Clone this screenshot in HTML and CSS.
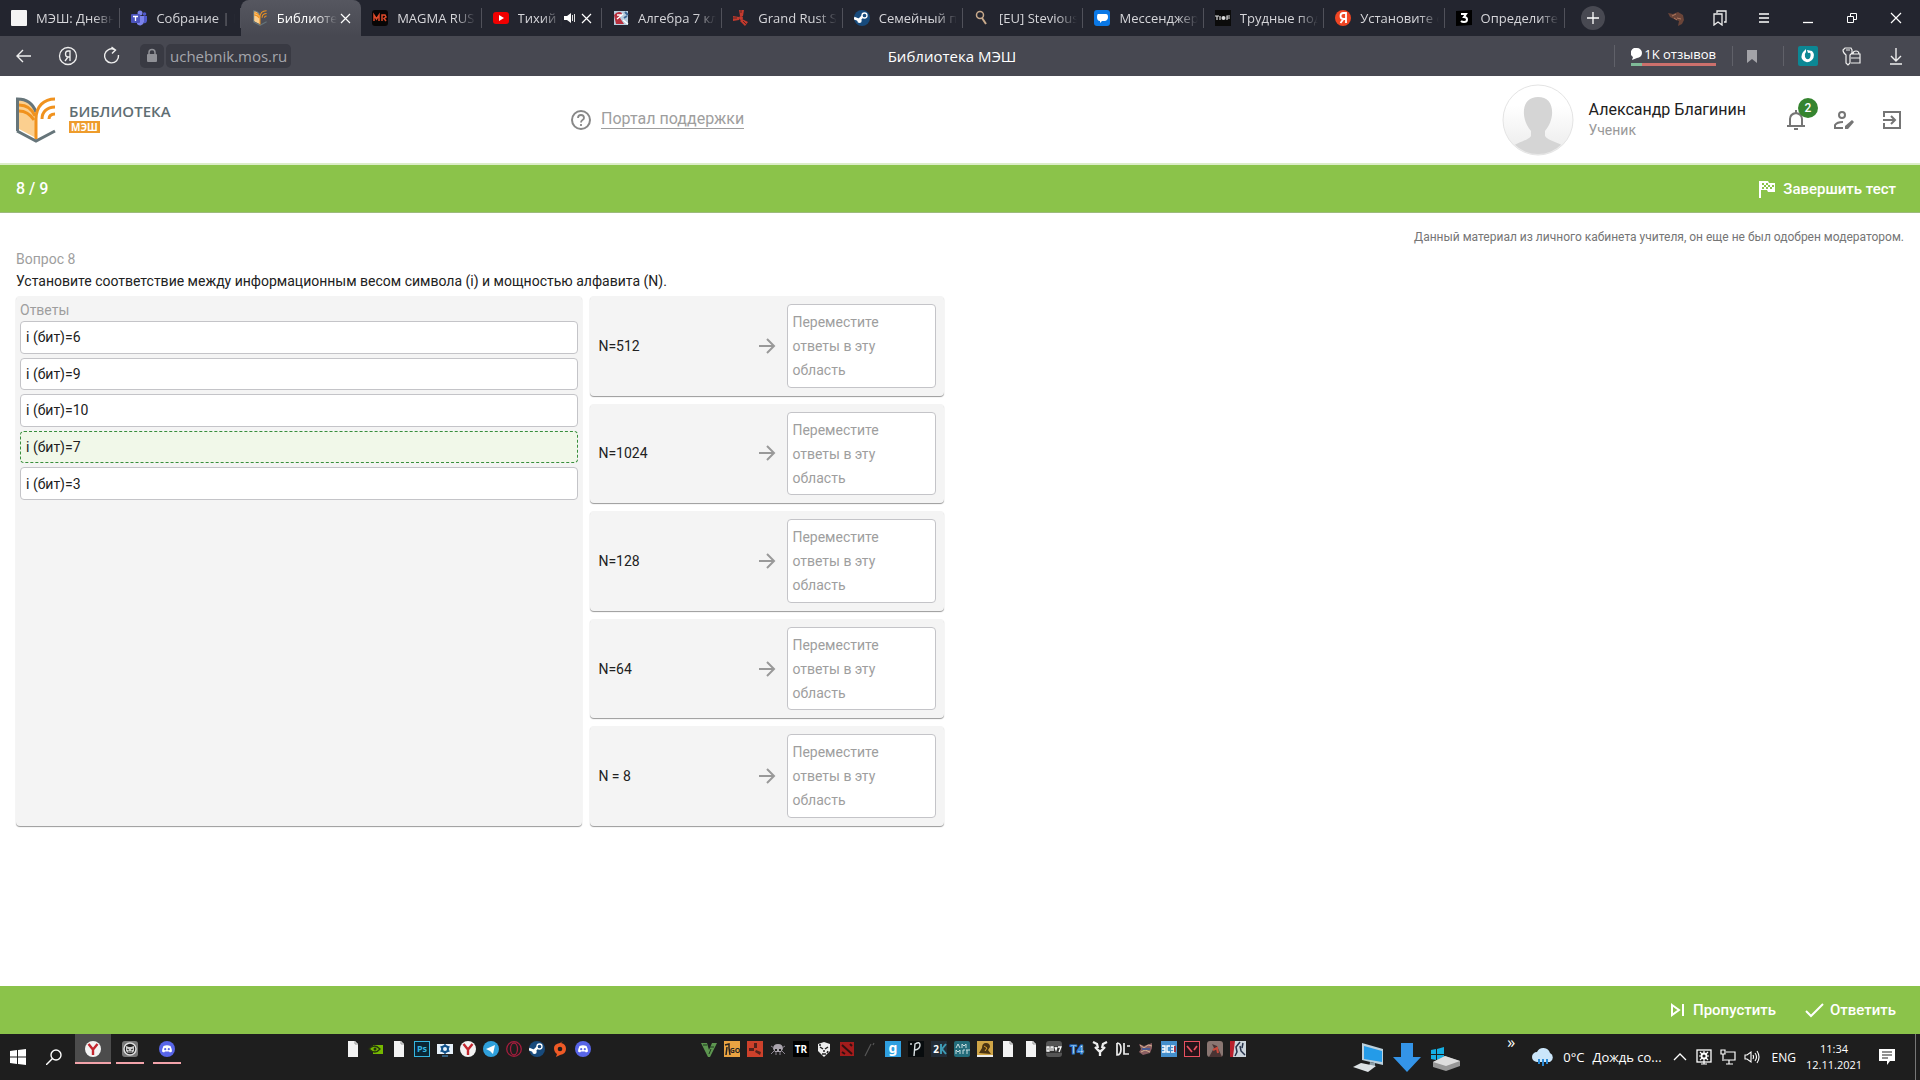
FILE: index.html
```html
<!DOCTYPE html>
<html lang="ru">
<head>
    <meta charset="UTF-8">
    <meta name="viewport" content="width=device-width, initial-scale=1.0">
    <title>Библиотека МЭШ</title>
    <link rel="stylesheet" href="styles.css">
</head>
<body>
    <!-- Shared icons -->
    <svg class="sprite" aria-hidden="true">
        <symbol id="i-book" viewBox="0 0 40 46">
            <path d="M3 3c8 0 14 5 17 12v26L3 32z" fill="#fbcf8f"/>
            <path d="M3 8c8 0 13 4 16 11M3 14c6 0 11 3 15 9" fill="none" stroke="#f0921e" stroke-width="3"/>
            <path d="M1.500 34V2C11 2 17 7 20 15" fill="none" stroke="#66757a" stroke-width="3"/>
            <path d="M1 34l19 10 19-10" fill="none" stroke="#66757a" stroke-width="3"/>
            <path d="M20 42V22C20 9 28 2 39 2M26 22c0-7 5-12 13-12M33 22c0-3 2-5 6-5" fill="none" stroke="#f0921e" stroke-width="3"/>
        </symbol>
        <symbol id="i-discord" viewBox="0 0 16 16">
            <circle cx="8" cy="8" r="8" fill="#5865e8"/>
            <path d="M4.500 5Q8 3.500 11.500 5q1.500 3 1.500 5.500l-2 1-1-1H6l-1 1-2-1Q3 8 4.500 5z" fill="#fff"/>
            <circle cx="6.200" cy="8.200" r="1.100" fill="#5865e8"/><circle cx="9.800" cy="8.200" r="1.100" fill="#5865e8"/>
        </symbol>
        <symbol id="i-yandex" viewBox="0 0 16 16">
            <circle cx="8" cy="8" r="8" fill="#f3f3f3"/>
            <path d="M3.500 3L8 8.500 12.500 3M8 8v6" fill="none" stroke="#c3272f" stroke-width="2.400"/>
        </symbol>
        <symbol id="i-steam" viewBox="0 0 16 16">
            <circle cx="8" cy="8" r="8" fill="#174a7c"/>
            <path d="M0 8l5 2 4-4" fill="none" stroke="#fff" stroke-width="2.600"/>
            <circle cx="10.500" cy="5.500" r="2.500" fill="#174a7c" stroke="#fff" stroke-width="1.300"/>
            <circle cx="5.500" cy="10.800" r="2.200" fill="#fff"/>
        </symbol>
        <symbol id="i-page" viewBox="0 0 16 16">
            <path d="M3 0h7l3 3v13H3z" fill="#f3f3f3"/><path d="M10 0v3h3" fill="none" stroke="#999"/>
        </symbol>
        <symbol id="i-rust" viewBox="0 0 16 16">
            <path d="M6 0h5l-1 6H7zM0 6l6 1v3l-6 1zM9 9l6 3-3 4-5-5z" fill="#c43a2e"/><circle cx="8" cy="8" r="2" fill="#c43a2e"/><path d="M0 8h4M8 0v3M10 11l3 3" stroke="#5a2420"/>
        </symbol>
        <symbol id="i-close" viewBox="0 0 16 16">
            <path d="M4 4l9 9M13 4l-9 9" fill="none" stroke="currentColor" stroke-width="1.200"/>
        </symbol>
        <symbol id="i-arrow" viewBox="0 0 24 24">
            <path d="M4 12h15M12 5l7 7-7 7" fill="none" stroke="#999" stroke-width="2"/>
        </symbol>
    </svg>

    <!-- Browser tabs -->
    <div class="tabbar">
        <nav class="tabs">
            <div class="tab"><svg class="icon" viewBox="0 0 16 16"><rect width="16" height="16" rx="1" fill="#f4f4f4"/></svg><a class="tab-title" href="#">МЭШ: Дневн</a></div>
            <div class="tab"><svg class="icon" viewBox="0 0 16 16"><circle cx="9" cy="3" r="2.500" fill="#7b83eb"/><circle cx="13.500" cy="4" r="1.800" fill="#5059c9"/><path d="M6 6h7v6a4 4 0 0 1-7 2z" fill="#7b83eb"/><path d="M13 6h3v5q-1 3-3 2z" fill="#5059c9"/><rect y="4" width="9" height="9" rx="1" fill="#4b53bc"/><path d="M2 6.500h5M4.500 6.500V11" stroke="#fff" stroke-width="1.300"/></svg><a class="tab-title" href="#">Собрание | М</a></div>
            <div class="tab active"><svg class="icon"><use href="#i-book"/></svg><a class="tab-title" href="#">Библиоте</a><button class="tab-close" aria-label="Закрыть"><svg class="icon"><use href="#i-close"/></svg></button></div>
            <div class="tab"><svg class="icon" viewBox="0 0 16 16"><rect width="16" height="16" rx="3" fill="#080606"/><path d="M2 11V5l2.500 4L7 5v6M10 11V5h3l1 2-2 1.500 2 2.500" fill="none" stroke="#e04a2a" stroke-width="1.500"/></svg><a class="tab-title" href="#">MAGMA RUS</a></div>
            <div class="tab"><svg class="icon" viewBox="0 0 16 16"><rect y="2" width="16" height="12" rx="3" fill="#f00000"/><path d="M6 5l5 3-5 3z" fill="#fff"/></svg><a class="tab-title" href="#">Тихий р</a><svg class="sound" viewBox="0 0 12 12"><path d="M0 4h3l4-3v10L3 8H0z" fill="#fff"/><path d="M8.500 3v6M10.500 2v8" stroke="#ddd"/></svg><button class="tab-close" aria-label="Закрыть"><svg class="icon"><use href="#i-close"/></svg></button></div>
            <div class="tab"><svg class="icon" viewBox="0 0 16 16"><rect x="1" y="1" width="14" height="14" fill="#b9cede"/><path d="M1 5q4-5 8-2l-2 5 4 6H3z" fill="#b72f3d"/><path d="M4 5h4M4 9l6-5M10 10l5 4" stroke="#fff" stroke-width="1.500"/><path d="M12 2l3 3M11 8l3-2" stroke="#3e6897" stroke-width="2"/></svg><a class="tab-title" href="#">Алгебра 7 кл</a></div>
            <div class="tab"><svg class="icon"><use href="#i-rust"/></svg><a class="tab-title" href="#">Grand Rust S</a></div>
            <div class="tab"><svg class="icon"><use href="#i-steam"/></svg><a class="tab-title" href="#">Семейный п</a></div>
            <div class="tab"><svg class="icon" viewBox="0 0 16 16"><circle cx="6" cy="5" r="3.500" fill="none" stroke="#c9aa8c" stroke-width="1.500"/><path d="M8 8l4 6" stroke="#c9aa8c" stroke-width="2"/></svg><a class="tab-title" href="#">[EU] Stevious</a></div>
            <div class="tab"><svg class="icon" viewBox="0 0 16 16"><rect width="16" height="16" rx="3" fill="#0a78e6"/><path d="M4 4h8q2 0 2 3t-3 4H8l-2 2v-2q-3 0-3-4 0-3 1-3z" fill="#fff"/></svg><a class="tab-title" href="#">Мессенджер</a></div>
            <div class="tab"><svg class="icon" viewBox="0 0 16 16"><rect width="16" height="16" fill="#0b0b0b"/><path d="M0 6h4M2 6v4M5 6v4M12 10V6h3M12 8h3" stroke="#ddd" stroke-width="1.200"/><circle cx="8.500" cy="8" r="2" fill="#ddd"/></svg><a class="tab-title" href="#">Трудные под</a></div>
            <div class="tab"><svg class="icon" viewBox="0 0 16 16"><circle cx="8" cy="8" r="8" fill="#ef4523"/><path d="M11 13V3H8.500Q5.500 3 5.500 6t3 3H11M8.500 9L5.500 13" fill="none" stroke="#fff" stroke-width="1.800"/></svg><a class="tab-title" href="#">Установите с</a></div>
            <div class="tab"><svg class="icon" viewBox="0 0 16 16"><path d="M0 1l16-1v15L0 16z" fill="#000"/><path d="M5 4h5L8 7q3 0 3 2.500T8 12q-2 0-3-1" fill="none" stroke="#fff" stroke-width="2"/></svg><a class="tab-title" href="#">Определите</a></div>
        </nav>
        <div class="window-tools">
            <button class="new-tab" aria-label="Новая вкладка"><svg class="icon" viewBox="0 0 16 16"><path d="M8 2v12M2 8h12" stroke="#fff" stroke-width="1.300"/></svg></button>
            <button class="win-btn" aria-label="Профиль"><svg class="icon" viewBox="0 0 16 16"><path d="M0 3l5 1 5-2 5 3 1 5-2 4-4 2 1-5-5-2-4-2z" fill="#6a4438"/><path d="M4 6l4-2M9 8l4 1M6 8l3 2" stroke="#b07a61"/></svg></button>
            <button class="win-btn" aria-label="Коллекции"><svg class="icon" viewBox="0 0 16 16"><path d="M5 3V1h9v11h-2M2 4h8v11l-4-3-4 3z" fill="none" stroke="#eee" stroke-width="1.300"/></svg></button>
            <button class="win-btn" aria-label="Меню"><svg class="icon" viewBox="0 0 16 16"><path d="M3 4h10M3 8h10M3 12h10" stroke="#fff" stroke-width="1.300"/></svg></button>
            <button class="win-btn" aria-label="Свернуть"><svg class="icon" viewBox="0 0 16 16"><path d="M3 12.500h10" stroke="#fff" stroke-width="1.300"/></svg></button>
            <button class="win-btn" aria-label="Развернуть"><svg class="icon" viewBox="0 0 16 16"><path d="M3.500 6.500h6v6h-6zM6.500 6V3.500h6v6H10" fill="none" stroke="#fff"/></svg></button>
            <button class="win-btn" aria-label="Закрыть окно"><svg class="icon" viewBox="0 0 16 16"><path d="M3 3l10 10M13 3L3 13" stroke="#fff" stroke-width="1.200"/></svg></button>
        </div>
    </div>

    <!-- Address bar -->
    <div class="toolbar">
        <div class="toolbar-side">
            <button class="nav-btn" aria-label="Назад"><svg viewBox="0 0 20 20"><path d="M17 10H3M9 4l-6 6 6 6" fill="none" stroke="#eee" stroke-width="1.400"/></svg></button>
            <button class="nav-btn" aria-label="Яндекс"><svg viewBox="0 0 20 20"><circle cx="10" cy="10" r="8.500" fill="none" stroke="#eee" stroke-width="1.300"/><path d="M12 15V5h-2q-2.500 0-2.500 3T10 11h2M10 11l-3 4" fill="none" stroke="#eee" stroke-width="1.300"/></svg></button>
            <button class="nav-btn" aria-label="Обновить"><svg viewBox="0 0 20 20"><path d="M16.500 9a7 7 0 1 1-4-5.500M9.500 1l4 3-3.500 3.500" fill="none" stroke="#eee" stroke-width="1.400"/></svg></button>
            <span class="lock"><svg class="icon" viewBox="0 0 16 16"><rect x="3" y="6" width="10" height="8" rx="1" fill="#909197"/><path d="M5 7V4.500a3 3 0 0 1 6 0V7" fill="none" stroke="#909197" stroke-width="1.500"/></svg></span>
            <a class="url" href="#">uchebnik.mos.ru</a>
        </div>
        <div class="page-title">Библиотека МЭШ</div>
        <div class="toolbar-side right">
            <a class="reviews" href="#"><span><svg viewBox="0 0 12 12"><path d="M6 0a5 5 0 0 1 0 10L1 12l1-3a5 5 0 0 1 4-9z" fill="#fff"/></svg>1K отзывов</span></a>
            <button class="mark" aria-label="Закладка"><svg class="icon" viewBox="0 0 16 16"><path d="M3 2h10v13l-5-4-5 4z" fill="#a3a3a8"/></svg></button>
            <button class="nav-btn" aria-label="Расширение"><svg viewBox="0 0 20 20"><rect width="20" height="20" rx="2" fill="#0c8794"/><path d="M8 3Q2 8 4 13q4 6 10 1 4-5 0-9l-5-1 1 3q4-1 2 5-3 3-5-1-1-3 1-5z" fill="#fff"/></svg></button>
            <button class="nav-btn" aria-label="Пароли"><svg viewBox="0 0 20 20"><path d="M4 9Q1 7 1 4l2-2h6l1 2v3L8 9v8l-2 2-2-2zM11 8q0-3 3-3t3 3M9 8h9v9H9M9 12h9M4 4h4" fill="none" stroke="#eee" stroke-width="1.200"/></svg></button>
            <button class="nav-btn" aria-label="Загрузки"><svg viewBox="0 0 20 20"><path d="M10 2v13M5 10l5 5 5-5M4 18h12" fill="none" stroke="#eee" stroke-width="1.400"/></svg></button>
        </div>
    </div>

    <header class="header">
        <a class="logo" href="#">
            <svg viewBox="0 0 40 46"><use href="#i-book"/></svg>
            <span class="logo-text"><b>БИБЛИОТЕКА</b><i>МЭШ</i></span>
        </a>
        <div class="support">
            <svg viewBox="0 0 20 20"><circle cx="10" cy="10" r="9" fill="none" stroke="#888" stroke-width="2"/><path d="M7 8q0-3 3-3t3 3q0 1-1.500 2T10 12.500M10 14v2" fill="none" stroke="#888" stroke-width="1.800"/></svg>
            <a href="#">Портал поддержки</a>
        </div>
        <div class="profile">
            <svg class="avatar" viewBox="0 0 72 72">
                <defs>
                    <clipPath id="face"><circle cx="36" cy="36" r="34"/></clipPath>
                    <linearGradient id="fade" x2="0" y2="1"><stop offset="0.300" stop-color="#fff"/><stop offset="1" stop-color="#eaeaea"/></linearGradient>
                </defs>
                <circle cx="36" cy="36" r="35" fill="url(#fade)" stroke="#e4e4e4"/>
                <path d="M36 13c10 0 15 7 14 18-1 8-4 12-7 16v5c3 5 15 6 20 12v10H9V64c5-6 17-7 20-12v-5c-3-4-6-8-7-16-1-11 4-18 14-18z" fill="#d5d5d5" clip-path="url(#face)"/>
            </svg>
            <div class="user">
                <div class="user-name">Александр Благинин</div>
                <div class="user-role">Ученик</div>
            </div>
            <button class="bell" aria-label="Уведомления"><svg viewBox="0 0 24 24"><path d="M6 18v-7q0-5 6-6 6 1 6 6v7M3 18h18M12 2v3M10 21h4" fill="none" stroke="#757575" stroke-width="2"/></svg><span class="badge">2</span></button>
            <button aria-label="Редактировать профиль"><svg viewBox="0 0 24 24"><circle cx="10" cy="7" r="3" fill="none" stroke="#757575" stroke-width="2"/><path d="M11 20H3v-3q2-3 8-3" fill="none" stroke="#757575" stroke-width="2"/><path d="M13 21v-3l7-6 2 2-6 7z" fill="#757575"/></svg></button>
            <button aria-label="Выход"><svg viewBox="0 0 24 24"><path d="M4 9V4h16v16H4v-5M3 12h12M11 8l4 4-4 4" fill="none" stroke="#757575" stroke-width="2"/></svg></button>
        </div>
    </header>

    <div class="test-bar">
        <span>8 / 9</span>
        <button class="bar-btn"><svg viewBox="0 0 20 20"><path d="M3 2v17" stroke="#fff" stroke-width="2"/><path d="M3 2h8l1 2h6v9h-7l-1-2H3z" fill="#fff"/><path d="M5 4h2v2H5zM9 4h2v2H9zM7 6h2v2H7zM11 6h2v2h-2zM5 8h2v2H5zM9 8h2v2H9zM13 8h2v2h-2zM15 6h2v2h-2z" fill="#8bc34a"/></svg>Завершить тест</button>
    </div>

    <main>
        <p class="notice">Данный материал из личного кабинета учителя, он еще не был одобрен модератором.</p>
        <div class="question-number">Вопрос 8</div>
        <h1>Установите соответствие между информационным весом символа (i) и мощностью алфавита (N).</h1>
        <div class="match">
            <section class="answers">
                <h2>Ответы</h2>
                <ul>
                    <li>i (бит)=6</li>
                    <li>i (бит)=9</li>
                    <li>i (бит)=10</li>
                    <li class="selected">i (бит)=7</li>
                    <li>i (бит)=3</li>
                </ul>
            </section>
            <section class="targets">
                <div class="target"><span>N=512</span><svg><use href="#i-arrow"/></svg><div class="drop">Переместите ответы в эту область</div></div>
                <div class="target"><span>N=1024</span><svg><use href="#i-arrow"/></svg><div class="drop">Переместите ответы в эту область</div></div>
                <div class="target"><span>N=128</span><svg><use href="#i-arrow"/></svg><div class="drop">Переместите ответы в эту область</div></div>
                <div class="target"><span>N=64</span><svg><use href="#i-arrow"/></svg><div class="drop">Переместите ответы в эту область</div></div>
                <div class="target"><span>N = 8</span><svg><use href="#i-arrow"/></svg><div class="drop">Переместите ответы в эту область</div></div>
            </section>
        </div>
    </main>

    <footer class="action-bar">
        <button class="bar-btn"><svg viewBox="0 0 20 20"><path d="M5 5l7 5-7 5zM16 4v12" fill="none" stroke="#fff" stroke-width="2"/></svg>Пропустить</button>
        <button class="bar-btn"><svg viewBox="0 0 20 20"><path d="M2 11l5 5L19 4" fill="none" stroke="#fff" stroke-width="2"/></svg>Ответить</button>
    </footer>

    <!-- Windows taskbar -->
    <div class="taskbar">
        <button class="start" aria-label="Пуск"><svg class="icon" viewBox="0 0 16 16"><path d="M0 2l7-1v6.500H0zM8 1l8-1v7.500H8zM0 8.500h7V15l-7-1zM8 8.500h8V16l-8-1z" fill="#fff"/></svg></button>
        <button class="start" aria-label="Поиск"><svg class="icon" viewBox="0 0 16 16"><circle cx="10" cy="6" r="5" fill="none" stroke="#fff" stroke-width="1.400"/><path d="M6.500 9.500L0 16" stroke="#fff" stroke-width="1.400"/></svg></button>
        <div class="apps">
            <button class="app current" aria-label="Яндекс"><svg class="icon"><use href="#i-yandex"/></svg></button>
            <button class="app" aria-label="Игра"><svg class="icon" viewBox="0 0 16 16"><rect width="16" height="16" rx="3" fill="#777"/><circle cx="8" cy="8" r="6" fill="#222" stroke="#ddd" stroke-width="1.500"/><path d="M4 5l3 1h2l3-1v5l-2 2H6l-2-2z" fill="#ccc"/><path d="M5 8l2 1M11 8L9 9M6 11h4" stroke="#222"/></svg></button>
            <button class="app" aria-label="Discord"><svg class="icon"><use href="#i-discord"/></svg></button>
        </div>
        <div class="quick">
            <svg class="icon"><use href="#i-page"/></svg>
            <svg class="icon" viewBox="0 0 16 16"><path d="M5 4h10v9H5z" fill="#76b900"/><path d="M1 8q5-6 11 0-5 6-11 0z" fill="#76b900" stroke="#26340e" stroke-width="1.300"/><circle cx="7" cy="8" r="1.500" fill="#26340e"/></svg>
            <svg class="icon"><use href="#i-page"/></svg>
            <svg class="icon" viewBox="0 0 16 16"><rect x="0.500" y="0.500" width="15" height="15" fill="#0a2634" stroke="#35b5e0"/><text x="8" y="11" class="t9" fill="#35b5e0">Ps</text></svg>
            <svg class="icon" viewBox="0 0 16 16"><path d="M0 3h16v10H0z" fill="#e8f2fa"/><circle cx="8" cy="8" r="3" fill="none" stroke="#11518a" stroke-width="2"/><path d="M8 3v2M8 11v2M3.500 5.500l2 1M12.500 5.500l-2 1M3.500 10.500l2-1M12.500 10.500l-2-1" stroke="#11518a" stroke-width="1.500"/><path d="M5 15h6" stroke="#4aa0e0"/></svg>
            <svg class="icon"><use href="#i-yandex"/></svg>
            <svg class="icon" viewBox="0 0 16 16"><circle cx="8" cy="8" r="8" fill="#2fa0dc"/><path d="M3 8l9-4-2 9-3-3z" fill="#fff"/></svg>
            <svg class="icon" viewBox="0 0 16 16"><circle cx="8" cy="8" r="7.300" fill="none" stroke="#a41d3d" stroke-width="1.300"/><ellipse cx="8" cy="8" rx="3.500" ry="6" fill="none" stroke="#a41d3d" stroke-width="1.300"/></svg>
            <svg class="icon"><use href="#i-steam"/></svg>
            <svg class="icon" viewBox="0 0 16 16"><path d="M11 0L9 2q5 1 5 6t-6 6l-4 2 1-3Q2 11 2 7t6-5z" fill="#ee5a26"/><circle cx="8" cy="8" r="2.300" fill="#1e1e1e"/></svg>
            <svg class="icon"><use href="#i-discord"/></svg>
        </div>
        <div class="quick games">
            <svg class="icon" viewBox="0 0 16 16"><path d="M0 2h6l2 7 3-7h5L9 16H7z" fill="#5d9650"/><path d="M2 4h4M9 6h4M8 13l2-5" stroke="#1d3a1b"/></svg>
            <svg class="icon" viewBox="0 0 16 16"><rect width="16" height="16" fill="#e9a342"/><path d="M1 4l4-1v4l1 7M3 6l-1 8" stroke="#222" stroke-width="1.500" fill="none"/><text x="11" y="12" class="t7" fill="#222">GO</text></svg>
            <svg class="icon" viewBox="0 0 16 16"><rect width="16" height="16" fill="#cd412b"/><path d="M7 2h3v5H7zM2 7h5v3H2zM9 9l5 2-1 3-5-3z" fill="#54221b"/></svg>
            <svg class="icon" viewBox="0 0 16 16"><path d="M3 8q0-5 5-5t5 5l-2 3H5z" fill="#aaa4ad"/><path d="M4 7l-3-2M4 10l-3 3M12 7l3-2M12 10l3 3M6 11v3M10 11v3" stroke="#8b8490"/><path d="M5 9h2M9 9h2" stroke="#1e1e1e" stroke-width="2"/></svg>
            <svg class="icon" viewBox="0 0 16 16"><rect width="16" height="16" fill="#000"/><text x="8" y="12" class="t10" fill="#fff">TR</text></svg>
            <svg class="icon" viewBox="0 0 16 16"><path d="M2 3l6-2 6 2v7l-6 6-6-6z" fill="#eee"/><path d="M4 6l3 2M12 6L9 8M8 9v2M6 13h4M4 3v2M12 10l-1 2" stroke="#222" stroke-width="1.500"/></svg>
            <svg class="icon" viewBox="0 0 16 16"><rect x="1" y="1" width="14" height="14" fill="#a41c1c"/><path d="M3 4l10 9M11 3l2 2M3 11l3 2" stroke="#301010" stroke-width="2"/></svg>
            <svg class="icon" viewBox="0 0 16 16"><path d="M3 15l6-12M11 4l1-2" stroke="#555" stroke-width="1.200"/></svg>
            <svg class="icon" viewBox="0 0 16 16"><rect width="16" height="16" fill="#2f9fe0"/><text x="8" y="12" class="t14" fill="#fff">g</text></svg>
            <svg class="icon" viewBox="0 0 16 16"><rect width="16" height="16" fill="#080c0e"/><path d="M6 15L7 3q5-3 5 1 0 4-5 5M3 2v2" fill="none" stroke="#d8dfe2" stroke-width="1.400"/></svg>
            <svg class="icon" viewBox="0 0 16 16"><rect width="16" height="16" fill="#222d38"/><text x="5" y="12" class="t10" fill="#fff">2</text><path d="M10 3v10M15 3l-4 5 4 5" stroke="#3e9ab4" stroke-width="2" fill="none"/></svg>
            <svg class="icon" viewBox="0 0 16 16"><rect width="16" height="16" rx="2" fill="#236c7a"/><path d="M2 7l2-4 2 4M8 7V3l2 2 2-2v4M2 13V9l2 2 2-2v4M9 13V9h2M13 9v4M12 9h4" stroke="#c8dde0" fill="none"/></svg>
            <svg class="icon" viewBox="0 0 16 16"><rect width="16" height="16" fill="#d0a546"/><path d="M2 12l3-5q0-5 4-5t4 4l-2 3 3 4z" fill="#4a3413"/><path d="M0 15h16" stroke="#eee" stroke-width="2"/><path d="M7 5l3 2-2 3" stroke="#d89f2c" fill="none"/></svg>
            <svg class="icon"><use href="#i-page"/></svg>
            <svg class="icon"><use href="#i-page"/></svg>
            <svg class="icon" viewBox="0 0 16 16"><rect width="16" height="16" rx="3" fill="#555"/><rect y="5" width="16" height="7" fill="#333"/><path d="M1 6v4h2V6zM5 10V6h2v4M9 6l1 3 1-3M12 6h3l-2 5" fill="none" stroke="#fff" stroke-width="1.300"/></svg>
            <svg class="icon" viewBox="0 0 16 16"><text x="8" y="13" class="t12" fill="#eef6ff" stroke="#2479d0">T4</text></svg>
            <svg class="icon" viewBox="0 0 16 16"><path d="M1 1l4 2 1 4M15 1l-4 2-1 4M3 6l4 4h2l4-4M8 9v6" fill="none" stroke="#eee" stroke-width="2.300"/></svg>
            <svg class="icon" viewBox="0 0 16 16"><path d="M2 2v12q4 0 4-6T2 2M9 2v11h5M12 5h3" fill="none" stroke="#eee" stroke-width="1.700"/></svg>
            <svg class="icon" viewBox="0 0 16 16"><path d="M1 3l5 2 8-3v5l-2 5-7 2-4-3 2-3z" fill="#8a5e62"/><path d="M2 4l4 3 4-3 4 1M3 11l4-2 5 2" stroke="#d5b390" fill="none"/><path d="M4 8h8" stroke="#4b5990" stroke-width="2"/></svg>
            <svg class="icon" viewBox="0 0 16 16"><rect width="16" height="16" fill="#448fcc"/><path d="M1 5h3v6H1M1 8h3M9 5H6v6h3M10 5h3v6h-3M10 8h3" fill="none" stroke="#fff" stroke-width="1.400"/><path d="M14 5v6" stroke="#9d3547" stroke-width="2"/></svg>
            <svg class="icon" viewBox="0 0 16 16"><rect x="0.500" y="0.500" width="15" height="15" fill="#241419" stroke="#e8515f"/><path d="M3 5l5 6M13 5l-3 4" stroke="#e8515f" stroke-width="1.800"/></svg>
            <svg class="icon" viewBox="0 0 16 16"><rect width="16" height="16" rx="3" fill="#8a7672"/><path d="M2 16l5-9-2-4 5 2 5 11z" fill="#493333"/><path d="M6 9l4-2 1 5" stroke="#cb4b3c" stroke-width="2" fill="none"/></svg>
            <svg class="icon" viewBox="0 0 16 16"><rect x="2" width="14" height="16" fill="#cdd5dc"/><path d="M0 0h5L3 16H0z" fill="#b8202c"/><path d="M10 1L6 6l1 5-2 4M10 5l1 5 4 4M13 2l-1 5" stroke="#26324a" stroke-width="1.500" fill="none"/></svg>
        </div>
        <div class="tray">
            <div class="desktop-icons">
                <svg viewBox="0 0 30 30"><path d="M9 1l21 6v16L9 18z" fill="#bcd0dc"/><path d="M11 4l18 5v11l-18-3z" fill="#249be8"/><path d="M17 20l5 1v4h-6z" fill="#8ea0aa"/><path d="M0 25l8-4 15 3-8 6z" fill="#dde2e5"/></svg>
                <svg viewBox="0 0 30 30"><path d="M9 1h12v14h8L15 30 1 15h8z" fill="#3494e8"/></svg>
                <svg viewBox="0 0 30 30"><path d="M0 8l5-1v5H0zM6 7l7-2v7H6zM0 13h5v5l-5-1zM6 13h7v6l-7-1z" fill="#16afe3"/><path d="M2 20l12-6 15 5v5l-14 5-13-4z" fill="#979797"/><path d="M2 20l12-6 15 5-14 5z" fill="#ddd"/></svg>
            </div>
            <button class="more">»</button>
            <button class="weather"><svg viewBox="0 0 24 24"><path d="M6 17a5 5 0 0 1 0-10 7 7 0 0 1 13 1 5 5 0 0 1 0 9z" fill="#cbe6fa"/><path d="M8 14v5M12 14v7M16 14v5" stroke="#2c8bd6" stroke-width="2"/></svg><span>0°C</span><span>Дождь со...</span></button>
            <div class="status">
                <svg class="icon" viewBox="0 0 16 16"><path d="M2 11l6-6 6 6" fill="none" stroke="#fff" stroke-width="1.300"/></svg>
                <svg class="icon" viewBox="0 0 16 16"><rect x="1" y="1" width="14" height="12" fill="none" stroke="#fff" stroke-width="1.300"/><circle cx="8" cy="7" r="2.500" fill="none" stroke="#fff" stroke-width="1.800"/><path d="M8 2v2M8 10v5M3 7h2M11 7h2M4 3l2 2M12 3l-2 2M4 11l2-2M12 11l-2-2M5 15h6" stroke="#fff" stroke-width="1.200"/></svg>
                <svg class="icon" viewBox="0 0 16 16"><path d="M6 3h9v8H4M9 11v4M6 15h7M1 1h4v4H1zM3 5v7" fill="none" stroke="#fff" stroke-width="1.200"/></svg>
                <svg class="icon" viewBox="0 0 16 16"><path d="M1 6h2l4-3v10l-4-3H1zM9 6q1 2 0 4M11 4q3 4 0 8M13 2q4 6 0 12" fill="none" stroke="#fff" stroke-width="1.100"/></svg>
            </div>
            <span class="lang">ENG</span>
            <div class="clock"><span>11:34</span><span>12.11.2021</span></div>
            <button class="notes" aria-label="Центр уведомлений"><svg class="icon" viewBox="0 0 16 16"><path d="M0 0h16v12h-5l-3 4v-4H0z" fill="#fff"/><path d="M3 3h10M3 6h10M3 9h6" stroke="#222" stroke-width="1.200"/></svg></button>
        </div>
    </div>
</body>
</html>
```
FILE: styles.css
```css
* {
    box-sizing: border-box;
}

body {
    margin: 0;
    min-height: 100vh;
    display: flex;
    flex-direction: column;
    font-family: Roboto, sans-serif;
    font-size: 14px;
    color: #212121;
    background-color: #fff;
}

button {
    font: inherit;
    color: inherit;
    background: none;
    border: 0;
    padding: 0;
    display: flex;
    align-items: center;
    justify-content: center;
    cursor: pointer;
}

a {
    color: inherit;
    text-decoration: none;
}

h1, h2, p, ul {
    margin: 0;
    padding: 0;
}

svg {
    display: block;
    flex: none;
}

.sprite {
    position: absolute;
    width: 0;
    height: 0;
}

.icon {
    width: 16px;
    height: 16px;
}

svg text {
    font-family: "Noto Sans", sans-serif;
    font-weight: bold;
    text-anchor: middle;
}

.t7 { font-size: 7px; }
.t9 { font-size: 9px; }
.t10 { font-size: 10px; }
.t12 { font-size: 12px; }
.t14 { font-size: 14px; }

/* Browser tabs */
.tabbar {
    display: flex;
    height: 36px;
    background-color: #23252f;
    color: #d6d6da;
    font-family: "Open Sans", sans-serif;
    font-size: 13px;
}

.tabs {
    flex: 1;
    display: grid;
    grid-template-columns: repeat(13, minmax(0, 1fr));
}

.tab {
    display: flex;
    align-items: center;
    padding: 0 6px 0 11px;
    background: linear-gradient(#50515a, #50515a) right center / 1px 20px no-repeat;
}

.tab.active {
    background: linear-gradient(#565760, #474851);
    border-radius: 8px 8px 0 0;
    color: #fff;
}

.tab-title {
    flex: 1;
    min-width: 0;
    margin-left: 9px;
    overflow: hidden;
    white-space: nowrap;
    -webkit-mask-image: linear-gradient(to right, #000 calc(100% - 20px), transparent);
    mask-image: linear-gradient(to right, #000 calc(100% - 20px), transparent);
}

.tab-close {
    color: #fff;
    margin: 0 2px 0 0;
}

.sound {
    width: 12px;
    height: 12px;
    margin: 0 2px;
}

.window-tools {
    width: 355px;
    display: flex;
    align-items: center;
    padding-right: 2px;
}

.new-tab {
    width: 24px;
    height: 24px;
    margin: 0 auto 0 16px;
    border-radius: 50%;
    background-color: #484952;
}

.win-btn {
    width: 44px;
    height: 36px;
}

/* Address bar */
.toolbar {
    display: flex;
    align-items: center;
    height: 40px;
    background-color: #474851;
    color: #fff;
    font-family: "Open Sans", sans-serif;
    font-size: 15px;
}

.toolbar-side {
    flex: 1;
    display: flex;
    align-items: center;
    padding-left: 2px;
}

.page-title {
    margin-right: 16px;
}

.nav-btn {
    width: 44px;
    height: 40px;
}

.nav-btn svg {
    width: 20px;
    height: 20px;
}

.lock,
.url {
    display: flex;
    align-items: center;
    height: 24px;
    border-radius: 5px;
    background-color: #393a43;
    color: #a5a6ac;
}

.lock {
    padding: 0 4px;
    margin: 0 2px 0 6px;
}

.url {
    padding: 0 4px;
}

.toolbar-side.right {
    justify-content: flex-end;
    padding: 0 2px 0 0;
}

.reviews {
    border-left: 1px solid #606169;
    padding-left: 16px;
    margin-right: 16px;
    font-size: 13px;
    line-height: 18px;
}

.reviews span {
    display: flex;
    align-items: center;
    gap: 1px;
    margin-bottom: 1px;
    border-bottom: 3px solid;
    border-image: linear-gradient(to right, #7fba98 14%, #cc706c 14%) 1;
}

.reviews svg {
    width: 12px;
    height: 12px;
}

.mark {
    width: 52px;
    height: 20px;
    margin-right: 2px;
    padding-right: 12px;
    border-left: 1px solid #606169;
    border-right: 1px solid #606169;
}

/* Page header */
.header {
    display: flex;
    align-items: center;
    height: 89px;
    padding: 0 16px;
    border-bottom: 2px solid #dcedc8;
}

.logo {
    width: 555px;
    display: flex;
    align-items: center;
    gap: 13px;
}

.logo svg {
    width: 40px;
    height: 46px;
}

.logo-text {
    display: flex;
    flex-direction: column;
    align-items: flex-start;
    padding-bottom: 5px;
    color: #5f6e73;
    font-family: "Open Sans", sans-serif;
    font-size: 15px;
    line-height: 20px;
}

.logo-text b {
    font-weight: 600;
}

.logo-text i {
    padding: 0 2px;
    background-color: #ee9c2c;
    color: #fff;
    font-size: 10px;
    font-style: normal;
    font-weight: bold;
    line-height: 12px;
}

.support {
    display: flex;
    align-items: center;
    gap: 10px;
    color: #9e9e9e;
    font-size: 16px;
}

.support svg {
    width: 20px;
    height: 20px;
}

.support a {
    border-bottom: 1px solid #9e9e9e;
    line-height: 18px;
}

.profile {
    display: flex;
    align-items: center;
    margin-left: auto;
}

.avatar {
    width: 72px;
    height: 72px;
    margin-right: 15px;
}

.user {
    margin-right: 38px;
    line-height: 20px;
}

.user-name {
    font-size: 16px;
}

.user-role {
    color: #999;
}

.profile button {
    margin-left: 24px;
}

.profile .bell {
    position: relative;
    margin-left: 0;
}

.profile button svg {
    width: 24px;
    height: 24px;
}

.badge {
    position: absolute;
    top: -10px;
    right: -10px;
    width: 20px;
    height: 20px;
    border-radius: 50%;
    background-color: #35842f;
    color: #fff;
    font-size: 12px;
    font-weight: 500;
    line-height: 20px;
}

/* Test */
.test-bar,
.action-bar {
    display: flex;
    align-items: center;
    justify-content: space-between;
    height: 48px;
    padding: 0 24px 0 16px;
    background-color: #8bc34a;
    color: #fff;
    font-size: 15px;
    font-weight: 500;
}

.test-bar {
    border-bottom: 1px solid #9dba7c;
}

.test-bar span {
    font-size: 16px;
}

.action-bar {
    justify-content: flex-end;
    gap: 28px;
}

.bar-btn {
    gap: 6px;
}

.bar-btn svg {
    width: 20px;
    height: 20px;
}

main {
    flex: 1;
    padding: 16px;
}

.notice {
    text-align: right;
    color: #757575;
    font-size: 12px;
    line-height: 16px;
}

.question-number {
    margin-top: 4px;
    color: #9e9e9e;
    line-height: 20px;
}

h1 {
    font-size: 14px;
    font-weight: 400;
    line-height: 24px;
    margin-bottom: 3px;
}

.match {
    display: grid;
    grid-template-columns: 30% 354px;
    gap: 8px;
    min-height: 530px;
}

.answers,
.target {
    background-color: #f4f4f4;
    border-radius: 4px;
    box-shadow: 0 1px 1px #999;
}

.answers {
    padding: 4px;
}

h2 {
    color: #9e9e9e;
    font-size: 14px;
    font-weight: 400;
    line-height: 21px;
}

.answers ul {
    display: grid;
    gap: 4px;
    min-height: 179px;
    list-style: none;
}

.answers li {
    display: flex;
    align-items: center;
    padding: 0 5px;
    background-color: #fff;
    border: 1px solid #c4c4c8;
    border-radius: 4px;
}

.answers .selected {
    background-color: #f1f8e9;
    border: 1px dashed #388e3c;
}

.targets {
    display: flex;
    flex-direction: column;
    gap: 8px;
}

.target {
    flex: 1;
    display: flex;
    align-items: center;
    padding: 8px;
}

.target span {
    flex: 1;
}

.target svg {
    width: 24px;
    height: 24px;
    margin-right: 8px;
}

.drop {
    width: 149px;
    align-self: stretch;
    padding: 5px 16px 4px 4px;
    background-color: #fff;
    border: 1px solid #c4c4c8;
    border-radius: 4px;
    color: #9e9e9e;
    line-height: 24px;
}

/* Windows taskbar */
.taskbar {
    display: flex;
    align-items: flex-start;
    height: 46px;
    background-color: #1e1e1e;
    color: #fff;
    font-family: "Open Sans", sans-serif;
    font-size: 12px;
}

.start {
    width: 36px;
    height: 46px;
}

.apps {
    display: flex;
    gap: 1px;
    margin-left: 3px;
}

.app {
    width: 36px;
    height: 30px;
    background: linear-gradient(#f2a3aa, #f2a3aa) center bottom / 28px 2px no-repeat;
}

.app.current {
    background-color: #4c4c4c;
    background-size: 36px 2px;
}

.quick {
    display: flex;
    gap: 7px;
    margin-left: 160px;
    padding-top: 7px;
}

.quick.games {
    margin-left: 110px;
}

.tray {
    display: flex;
    align-items: center;
    height: 46px;
    margin-left: auto;
    margin-right: 4px;
    border-right: 1px solid #777;
}

.desktop-icons {
    display: flex;
    gap: 9px;
    margin-right: 46px;
}

.desktop-icons svg {
    width: 30px;
    height: 30px;
}

.more {
    align-self: flex-start;
    font-size: 16px;
    line-height: 16px;
    margin-right: 16px;
}

.weather {
    gap: 8px;
    font-size: 13px;
    margin-right: 10px;
}

.weather svg {
    width: 24px;
    height: 24px;
}

.status {
    display: flex;
    gap: 8px;
}

.lang {
    margin-left: 12px;
}

.clock {
    display: flex;
    flex-direction: column;
    align-items: center;
    width: 56px;
    margin: 0 17px 0 10px;
    font-size: 11px;
    line-height: 16px;
}

.notes {
    margin-right: 20px;
}
```
